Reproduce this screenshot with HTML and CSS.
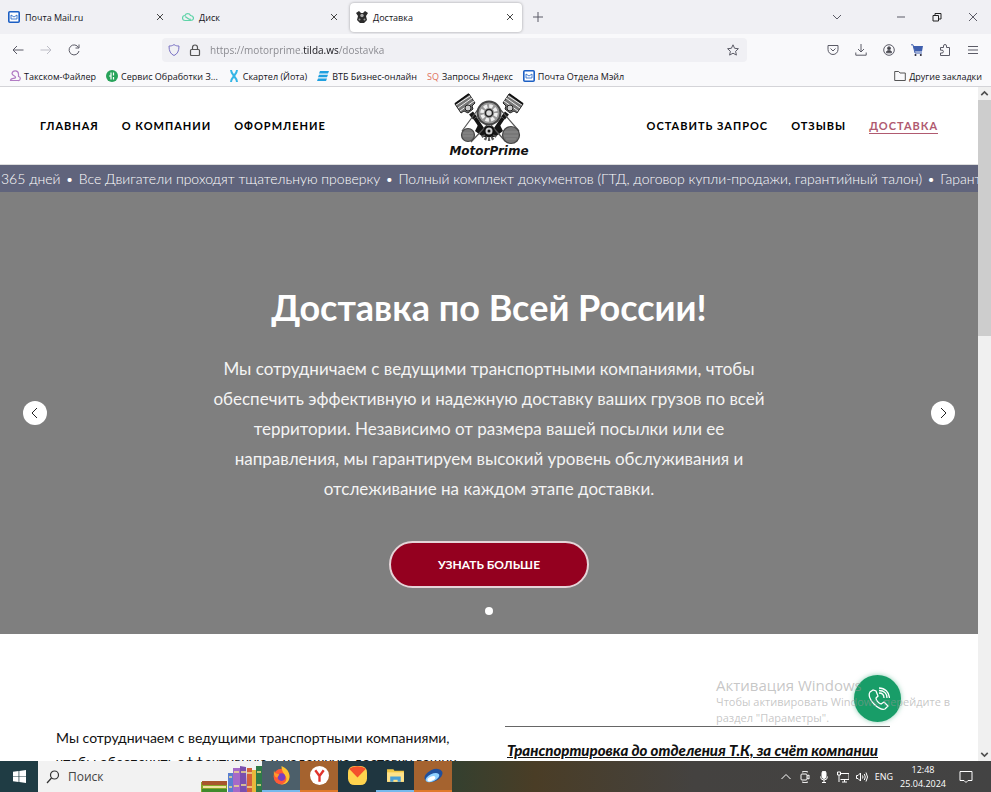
FILE: index.html
```html
<!DOCTYPE html>
<html lang="ru">
<head>
    <meta charset="UTF-8">
    <meta name="viewport" content="width=device-width, initial-scale=1.0">
    <title>Доставка</title>
    <link rel="stylesheet" href="styles.css">
</head>
<body>
    <!-- Browser tabs -->
    <div class="tab-bar">
        <div class="tab">
            <svg class="icon-small" viewBox="0 0 12 12"><rect x=".8" y=".8" width="10.400" height="10.400" rx="1" fill="#fff" stroke="#1c5fc4" stroke-width="1.600"/><path d="M3 4v4h6V4M3 4l3 2 3-2" fill="none" stroke="#1c5fc4" stroke-width=".8"/></svg>
            <span class="tab-title">Почта Mail.ru</span>
            <button class="tab-close" aria-label="Закрыть"><svg viewBox="0 0 8 8"><path d="M1 1l6 6M7 1L1 7"/></svg></button>
        </div>
        <div class="tab">
            <svg class="icon-small" viewBox="0 0 12 12"><path d="M3 9.500a2.500 2.500 0 0 1 0-5 3 3 0 0 1 5.500 0c4 .5 4 5 0 5zM3 6c2-.5 3 3.500 6 2" fill="none" stroke="#5fd3a8" stroke-width="1.200"/></svg>
            <span class="tab-title">Диск</span>
            <button class="tab-close" aria-label="Закрыть"><svg viewBox="0 0 8 8"><path d="M1 1l6 6M7 1L1 7"/></svg></button>
        </div>
        <div class="tab active">
            <svg class="icon-small" viewBox="0 0 12 12"><path d="M0 2l3-2 2 2h2l2-2 3 2-2 3 1 4-3 3H4L1 9l1-4z" fill="#2b2b2b"/><circle cx="6" cy="4.500" r="1.700" fill="#aaa"/><circle cx="3.500" cy="8.500" r="1" fill="#999"/><circle cx="8.500" cy="8.500" r="1" fill="#999"/></svg>
            <span class="tab-title">Доставка</span>
            <button class="tab-close" aria-label="Закрыть"><svg viewBox="0 0 8 8"><path d="M1 1l6 6M7 1L1 7"/></svg></button>
        </div>
        <button class="icon-button" aria-label="Новая вкладка"><svg viewBox="0 0 12 12"><path d="M6 1v10M1 6h10"/></svg></button>
        <div class="window-controls">
            <button class="icon-button list-tabs" aria-label="Список вкладок"><svg viewBox="0 0 12 12"><path d="M2 4l4 4 4-4"/></svg></button>
            <button class="icon-button" aria-label="Свернуть"><svg viewBox="0 0 12 12"><path d="M2 6h8"/></svg></button>
            <button class="icon-button" aria-label="Восстановить"><svg viewBox="0 0 12 12"><path d="M2 4.500h5.500V10H2zM4 4.500V2.500h6v5.500H7.500" stroke="#222"/></svg></button>
            <button class="icon-button" aria-label="Закрыть окно"><svg viewBox="0 0 12 12"><path d="M2 2l8 8M10 2l-8 8"/></svg></button>
        </div>
    </div>

    <!-- Address bar -->
    <div class="nav-bar">
        <div class="nav-buttons">
            <button class="icon-button" aria-label="Назад"><svg viewBox="0 0 12 12"><path d="M11.500 6H1M5 2L1 6l4 4"/></svg></button>
            <button class="icon-button disabled" aria-label="Вперёд"><svg viewBox="0 0 12 12"><path d="M.5 6H11M7 2l4 4-4 4"/></svg></button>
            <button class="icon-button" aria-label="Обновить"><svg viewBox="0 0 12 12"><path d="M10.500 3.500A5 5 0 1 0 11 7M11 .5v3.500H7.500"/></svg></button>
        </div>
        <div class="address">
            <svg class="icon-small" viewBox="0 0 12 12"><path d="M6 .6C4 2 2.500 2 1 2c0 5 1.500 8 5 9.500C9.500 10 11 7 11 2 9.500 2 8 2 6 .6z" fill="none" stroke="#7a72c4"/></svg>
            <svg class="icon-small" viewBox="0 0 12 12"><rect x="1.500" y="5.500" width="9" height="6" rx="1" fill="none" stroke="#555" stroke-width="1.200"/><path d="M3.500 5.500V3.500a2.500 2.500 0 0 1 5 0v2" fill="none" stroke="#555" stroke-width="1.200"/></svg>
            <input class="url" type="text" aria-label="Адрес" value="https://motorprime.tilda.ws/dostavka">
            <button class="icon-button" aria-label="В закладки"><svg viewBox="0 0 12 12"><path d="M6 .8l1.600 3.500 3.800.4-2.800 2.600.8 3.800L6 9.200l-3.400 1.900.8-3.800L.6 4.700l3.800-.4z"/></svg></button>
        </div>
        <div class="nav-tools">
            <button class="icon-button" aria-label="Pocket"><svg viewBox="0 0 12 12"><path d="M1 1.500h10v4a5 5 0 0 1-10 0zM3.500 4.500L6 7l2.500-2.500"/></svg></button>
            <button class="icon-button" aria-label="Загрузки"><svg viewBox="0 0 12 12"><path d="M6 0v8M3 5l3 3 3-3M.8 8.500v2.700h10.400V8.500"/></svg></button>
            <button class="icon-button" aria-label="Аккаунт"><svg viewBox="0 0 12 12"><circle cx="6" cy="6" r="5.300"/><circle cx="6" cy="4.300" r="1.500" fill="#444"/><path d="M3.300 8.800a2.700 2.200 0 0 1 5.400 0z" fill="#444"/></svg></button>
            <button class="icon-button" aria-label="Корзина"><svg viewBox="0 0 12 12"><path d="M2 2h10L11 7.500H4z" fill="#3f5fae" stroke="none"/><path d="M0 .8h2L4 9h7" stroke="#3f5fae"/><circle cx="4.500" cy="11" r="1" fill="#223" stroke="none"/><circle cx="9.800" cy="11" r="1" fill="#223" stroke="none"/></svg></button>
            <button class="icon-button" aria-label="Расширения"><svg viewBox="0 0 12 12"><path d="M1.500 3.500h3V2a1.500 1.500 0 0 1 3 0v1.500H10.500v8H1.500V9H3a1.300 1.300 0 0 0 0-2.800H1.500z"/></svg></button>
            <button class="icon-button" aria-label="Меню"><svg viewBox="0 0 12 12"><path d="M1 2.500h10M1 6h10M1 9.500h10"/></svg></button>
        </div>
    </div>

    <!-- Bookmarks -->
    <div class="bookmarks">
        <a class="bookmark" href="#"><svg class="icon-small" viewBox="0 0 12 12"><path d="M1.500 10.500h7.500a2 2 0 0 0 .5-4V4A3.300 3.300 0 0 0 3 3.500C3 6 7 5.500 6.500 7.500S2 7 1.500 10.500z" fill="none" stroke="#b27cc4" stroke-width="1.200"/></svg>Такском-Файлер</a>
        <a class="bookmark" href="#"><svg class="icon-small" viewBox="0 0 12 12"><circle cx="6" cy="6" r="6" fill="#28a35a"/><path d="M5 2.500v7M7.500 2.500v3M7.500 7v2.500M3 6h2" stroke="#fff" stroke-width="1.200"/></svg>Сервис Обработки З...</a>
        <a class="bookmark" href="#"><svg class="icon-small" viewBox="0 0 12 12"><path d="M3 0c0 5 6 7 6 12M9 0c0 5-6 7-6 12" fill="none" stroke="#35b6e6" stroke-width="2"/></svg>Скартел (Йота)</a>
        <a class="bookmark" href="#"><svg class="icon-small" viewBox="0 0 12 12"><path d="M3 1h9l-1 2.500H2zM2 4.700h9L10 7.200H1zM1 8.400h9L9 11H0z" fill="#1fa0e0"/></svg>ВТБ Бизнес-онлайн</a>
        <a class="bookmark" href="#"><span class="sq">SQ</span>Запросы Яндекс</a>
        <a class="bookmark" href="#"><svg class="icon-small" viewBox="0 0 12 12"><rect x=".8" y=".8" width="10.400" height="10.400" rx="1" fill="#fff" stroke="#1c5fc4" stroke-width="1.600"/><path d="M3 4v4h6V4M3 4l3 2 3-2" fill="none" stroke="#1c5fc4" stroke-width=".8"/></svg>Почта Отдела Мэйл</a>
        <a class="bookmark other" href="#"><svg class="icon-small" viewBox="0 0 12 12"><path d="M.7 10.500v-9h4L6 3h5.300v7.500z" fill="none" stroke="#555"/></svg>Другие закладки</a>
    </div>

    <!-- Page -->
    <div class="viewport">
        <div class="page">
            <header class="header">
                <nav class="menu">
                    <a href="#">ГЛАВНАЯ</a>
                    <a href="#">О КОМПАНИИ</a>
                    <a href="#">ОФОРМЛЕНИЕ</a>
                </nav>
                <a class="logo" href="#">
                    <svg viewBox="0 0 72 52">
                        <!-- pistons -->
                        <g id="piston">
                            <path d="M2 11L16 1l6 9-3 3 1 3-5 4-4-2-3 2z" fill="#777" stroke="#222"/>
                            <path d="M3 12L17 3M5 15L19 5M7 18L21 8" stroke="#eee" stroke-width="1"/>
                            <path d="M2 11L16 1" stroke="#111" stroke-width="2"/>
                            <circle cx="15" cy="15" r="3" fill="#ccc" stroke="#222"/>
                            <path d="M18 20l4 5" stroke="#161616" stroke-width="5"/>
                        </g>
                        <use href="#piston" transform="translate(72 0) scale(-1 1)"/>
                        <!-- belts and pulleys -->
                        <path d="M22 25l8 12M50 25l-8 12" stroke="#151515" stroke-width="4"/>
                        <path d="M25 32l11 6 11-6 3 6-8 6H30l-8-6z" fill="#151515"/>
                        <path d="M26 15L9 38M46 15l20 23M35 31L18 49M38 32l14 16" stroke="#555" stroke-width="1.200"/>
                        <circle cx="36" cy="20" r="11.500" fill="#999" stroke="#444" stroke-width="2"/>
                        <circle cx="36" cy="20" r="7" fill="none" stroke="#eee" stroke-width="3.500" stroke-dasharray="3.500 2"/>
                        <circle cx="36" cy="20" r="3.500" fill="#ddd" stroke="#222" stroke-width="1.500"/>
                        <path d="M30 42a6.500 6.500 0 0 0 12 0" stroke="#555" stroke-width="4" stroke-dasharray="2 1.300"/>
                        <circle cx="36" cy="38" r="4.500" fill="#ccc" stroke="#111" stroke-width="2"/>
                        <circle cx="36" cy="38" r="1.500" fill="#111"/>
                        <circle cx="15" cy="42" r="6.500" fill="#777" stroke="#444" stroke-width="1.200"/>
                        <circle cx="58" cy="42" r="8.500" fill="#777" stroke="#444" stroke-width="1.200"/>
                        <path d="M10 40h10M10 43h10M51 39h14M51 43h14M53 46h10" stroke="#8c8c8c"/>
                    </svg>
                    <span class="logo-text">MotorPrime</span>
                </a>
                <nav class="menu menu-right">
                    <a href="#">ОСТАВИТЬ ЗАПРОС</a>
                    <a href="#">ОТЗЫВЫ</a>
                    <a class="current" href="#">ДОСТАВКА</a>
                </nav>
            </header>

            <div class="ticker">
                <span>365 дней</span><span>•</span>
                <span>Все Двигатели проходят тщательную проверку</span><span>•</span>
                <span>Полный комплект документов (ГТД, договор купли-продажи, гарантийный талон)</span><span>•</span>
                <span>Гарант</span>
            </div>

            <section class="hero">
                <button class="arrow" aria-label="Назад"><svg viewBox="0 0 12 12"><path d="M8 1L3 6l5 5"/></svg></button>
                <div class="slide">
                    <h1>Доставка по Всей России!</h1>
                    <p>Мы сотрудничаем с ведущими транспортными компаниями, чтобы<br>
                    обеспечить эффективную и надежную доставку ваших грузов по всей<br>
                    территории. Независимо от размера вашей посылки или ее<br>
                    направления, мы гарантируем высокий уровень обслуживания и<br>
                    отслеживание на каждом этапе доставки.</p>
                    <a class="more" href="#">УЗНАТЬ БОЛЬШЕ</a>
                    <span class="dot"></span>
                </div>
                <button class="arrow" aria-label="Вперёд"><svg viewBox="0 0 12 12"><path d="M4 1l5 5-5 5"/></svg></button>
            </section>

            <section class="info">
                <p class="info-text">Мы сотрудничаем с ведущими транспортными компаниями,<br>
                чтобы обеспечить эффективную и надежную доставку ваших</p>
                <div class="info-item"><a href="#">Транспортировка до отделения Т.К, за счёт компании</a></div>
            </section>
        </div>

        <button class="call" aria-label="Позвонить">
            <svg viewBox="0 0 24 24"><path d="M7 3L4 5c-2 3 0 8 4 12s8 6 11 5l3-3-4-4-3 2c-3-1-5-4-5-6l2-2-2-5zM13 6c3 0 5 2 5 5M13 3.500c5 0 8 3 8 7.500M13 1c6 0 10 4 10.500 10"/></svg>
        </button>
        <div class="watermark">
            <div class="watermark-title">Активация Windows</div>
            Чтобы активировать Windows, перейдите в<br>раздел "Параметры".
        </div>

        <div class="scrollbar">
            <svg viewBox="0 0 12 12"><path d="M3 7.500l3-3 3 3"/></svg>
            <div class="thumb"></div>
            <svg viewBox="0 0 12 12"><path d="M3 4.500l3 3 3-3"/></svg>
        </div>
    </div>

    <!-- Taskbar -->
    <div class="taskbar">
        <button class="start" aria-label="Пуск"><svg viewBox="0 0 14 14"><path d="M0 2l6-.8v5.400H0zM6.800 1L14 0v6.600H6.800zM0 7.400h6v5.400L0 12zM6.800 7.400H14V14l-7.200-1z" fill="#fff"/></svg></button>
        <div class="search">
            <svg class="search-icon" viewBox="0 0 14 14"><circle cx="8.500" cy="5" r="4" fill="none" stroke="#333" stroke-width="1.200"/><path d="M5.500 8L1 13" stroke="#333" stroke-width="1.200"/></svg>
            <input type="text" placeholder="Поиск" aria-label="Поиск">
            <svg class="books" viewBox="0 0 62 31">
                <path d="M1 21h26v10H1z" fill="#8aa62a"/><path d="M2 20h25v4H2z" fill="#a8552c"/><path d="M3 25h23v2H3z" fill="#f0e3a0"/><path d="M2 28h25v3H2z" fill="#3f8a2c"/>
                <path d="M28 12h5v19h-5z" fill="#5a7fd0"/><path d="M33 7h7v24h-7z" fill="#a569c8"/><path d="M40 5l6 1 1 25h-7z" fill="#7a4fae"/><path d="M47 7h5v24h-5z" fill="#d3603c"/><path d="M52 9h4v22h-4z" fill="#e8b93c"/><path d="M56 5h6v26h-6z" fill="#2f7a48"/>
                <path d="M34 11h5M34 25h5M41 11h5M41 24h5M47 12h5M47 26h5M57 11h4M57 24h4M29 16h3M29 26h3" stroke="#f2dd8a" stroke-width="1.500"/>
            </svg>
        </div>
        <button class="app app-open" aria-label="Firefox"><svg viewBox="0 0 18 18"><circle cx="9" cy="10" r="7.500" fill="#ff5a36"/><path d="M9 0c5 2 8 6 7.500 11S12 18 8 17.500c6-1 7-6 4-9-1-2-3-4-3-8.500z" fill="#ffc22e"/><circle cx="9" cy="10.500" r="3.600" fill="#7a3fc0"/><path d="M2 4c0 3 2 3 5 4l-2 3c-2 0-4-3-3-7z" fill="#ff9a2a"/></svg></button>
        <button class="app app-alert" aria-label="Яндекс Браузер"><svg viewBox="0 0 18 18"><circle cx="9" cy="9" r="9" fill="#fff"/><path d="M5 4l4 5.500L13 4M9 9v6" fill="none" stroke="#e0332c" stroke-width="2.200"/></svg></button>
        <button class="app" aria-label="Яндекс Почта"><svg viewBox="0 0 18 18"><rect width="18" height="18" rx="6" fill="#ffd34e"/><path d="M1 2.500Q9-2 17 2.500L9 11z" fill="#f4502c"/></svg></button>
        <button class="app app-open app-plain" aria-label="Проводник"><svg viewBox="0 0 18 18"><path d="M1 3h6l1 1.500h9V15H1z" fill="#f3c846"/><path d="M1 6h16v9H1z" fill="#ffe28a"/><path d="M4 15v-5h10v5h-3v-2H7v2z" fill="#4b9fd6"/></svg></button>
        <button class="app app-alert" aria-label="Яндекс Диск"><svg viewBox="0 0 18 18"><ellipse cx="9" cy="9" rx="9" ry="5.500" transform="rotate(-25 9 9)" fill="#1f4f9c"/><ellipse cx="8" cy="11" rx="7" ry="3.500" transform="rotate(-25 8 11)" fill="#8fd0ff"/><ellipse cx="7" cy="12" rx="4" ry="2" transform="rotate(-25 7 12)" fill="#fff"/></svg></button>
        <div class="tray">
            <svg viewBox="0 0 12 12"><path d="M1.500 8L6 3.500 10.500 8"/></svg>
            <svg viewBox="0 0 12 12"><rect x="2" y="3" width="6" height="6" rx="1"/><path d="M8 5l2-1v4L8 7M3 1q3-1.500 6 0M3 11q3 1.500 6 0"/></svg>
            <svg viewBox="0 0 12 12"><rect x="4" y="0" width="4" height="7.500" rx="2" fill="#fff"/><path d="M2.500 5.500a3.500 3.500 0 0 0 7 0M6 9v3M4 11.500h4"/></svg>
            <svg viewBox="0 0 12 12"><path d="M3.500 2.500H12v6H3.500M7.500 8.500v2.500M5 11h5M.5 1h3v3h-3zM2 4v7"/></svg>
            <svg viewBox="0 0 12 12"><path d="M.5 4.500H2L4.500 2v8L2 7.500H.5zM6.500 4.500q1 1.500 0 3M8.300 3q2 3 0 6M10 1.500q3 4.500 0 9"/></svg>
            <span>ENG</span>
            <div class="clock">12:48<br>25.04.2024</div>
            <svg class="notes" viewBox="0 0 14 14"><path d="M1 1.500h12v9H9L7 12.500 5 10.500H1z"/></svg>
        </div>
    </div>
</body>
</html>
```
FILE: styles.css
```css
* {
    box-sizing: border-box;
}

body {
    margin: 0;
    height: 100vh;
    display: flex;
    flex-direction: column;
    overflow: hidden;
    font-family: "Open Sans", "Noto Sans", sans-serif;
    font-size: 9px;
    color: #15141a;
    background: #ffffff;
}

a {
    color: inherit;
    text-decoration: none;
}

button {
    padding: 0;
    border: none;
    background: none;
    cursor: pointer;
}

input {
    min-width: 0;
    padding: 0;
    border: none;
    outline: none;
    background: none;
    font-family: inherit;
}

.icon-small {
    width: 12px;
    height: 12px;
    flex: none;
}

.icon-button {
    width: 28px;
    height: 24px;
    display: flex;
    justify-content: center;
    align-items: center;
}

.icon-button svg {
    width: 12px;
    height: 12px;
    fill: none;
    stroke: #5b5b66;
    stroke-width: 1;
}

.icon-button.disabled svg {
    stroke: #bdbdc6;
}

/* tabs */
.tab-bar {
    height: 34px;
    flex: none;
    display: flex;
    align-items: center;
    background: #f0f0f4;
}

.tab {
    width: 172px;
    height: 29px;
    margin-right: 2px;
    padding: 0 8px;
    display: flex;
    align-items: center;
    gap: 5px;
    border-radius: 4px;
}

.tab.active {
    margin-left: 2px;
    padding-left: 6px;
    background: #ffffff;
    box-shadow: 0 0 3px rgba(0, 0, 0, 0.35);
}

.tab-title {
    flex: 1;
}

.tab-close {
    width: 8px;
    height: 8px;
    display: flex;
}

.tab-close svg {
    width: 8px;
    height: 8px;
    stroke: #444;
}

.window-controls {
    margin-left: auto;
    display: flex;
}

.window-controls .icon-button {
    width: 36px;
}

.window-controls .list-tabs {
    margin-right: 28px;
}

/* address bar */
.nav-bar {
    height: 32px;
    flex: none;
    display: grid;
    grid-template-columns: 162px 1fr 244px;
    align-items: center;
    background: #f9f9fb;
}

.nav-buttons {
    padding-left: 4px;
    display: flex;
}

.address {
    height: 24px;
    padding-left: 6px;
    display: flex;
    align-items: center;
    gap: 9px;
    border-radius: 4px;
    background: #f0f0f4;
}

/* the domain is darker than the rest of the address */
.url {
    flex: 1;
    font-size: 10px;
    color: transparent;
    background: linear-gradient(to right, #85858b 93px, #15141a 93px, #15141a 129px, #85858b 129px);
    background-clip: text;
    -webkit-background-clip: text;
}

.nav-tools {
    padding-right: 4px;
    display: flex;
    justify-content: flex-end;
}

/* bookmarks */
.bookmarks {
    height: 21px;
    flex: none;
    padding: 0 9px;
    display: flex;
    align-items: center;
    gap: 10px;
    border-bottom: 1px solid #d4d4d8;
    background: #f9f9fb;
}

.bookmark {
    display: flex;
    align-items: center;
    gap: 3px;
    white-space: nowrap;
}

.bookmark.other {
    margin-left: auto;
}

.sq {
    color: #e0705c;
}

/* page */
.viewport {
    position: relative;
    flex: 1;
    min-height: 0;
    display: flex;
}

.page {
    flex: 1;
    min-width: 0;
    overflow: hidden;
    font-family: Lato, "Open Sans", sans-serif;
}

.header {
    height: 78px;
    padding: 0 40px;
    display: grid;
    grid-template-columns: 1fr auto 1fr;
    align-items: center;
    border-bottom: 1px solid #ddd;
}

.menu {
    display: flex;
    gap: 23px;
    font-size: 11px;
    line-height: 15px;
    font-weight: bold;
    letter-spacing: 1px;
    white-space: nowrap;
    color: #000000;
}

.menu-right {
    justify-content: flex-end;
}

.menu .current {
    color: #b05a70;
    border-bottom: 1px solid #b05a70;
}

.logo {
    padding-bottom: 2px;
    display: flex;
    flex-direction: column;
    align-items: center;
}

.logo svg {
    width: 72px;
    height: 52px;
    fill: none;
}

.logo-text {
    font-family: "DejaVu Sans", sans-serif;
    font-size: 12px;
    line-height: 12px;
    font-weight: bold;
    font-style: italic;
    color: #111;
}

.ticker {
    height: 27px;
    padding-left: 1px;
    display: flex;
    align-items: center;
    gap: 5px;
    overflow: hidden;
    font-size: 14px;
    font-weight: 300;
    white-space: nowrap;
    color: #ffffff;
    background: #60647c;
}

.hero {
    height: 442px;
    padding: 0 23px;
    display: flex;
    justify-content: space-between;
    align-items: center;
    background: #7f7f7f;
}

.arrow {
    width: 24px;
    height: 24px;
    display: flex;
    justify-content: center;
    align-items: center;
    border-radius: 50%;
    background: #ffffff;
}

.arrow svg {
    width: 12px;
    height: 12px;
    fill: none;
    stroke: #222;
}

.slide {
    padding-top: 73px;
    display: flex;
    flex-direction: column;
    align-items: center;
    text-align: center;
    color: #ffffff;
}

.slide h1 {
    margin: 0 0 24px;
    font-size: 36px;
    line-height: 46px;
    font-weight: bold;
}

.slide p {
    margin: 0 0 37px;
    font-size: 17px;
    line-height: 30px;
    white-space: nowrap;
    color: #f4f4f4;
}

.more {
    width: 200px;
    height: 47px;
    display: flex;
    justify-content: center;
    align-items: center;
    border: 2px solid #e4d4d8;
    border-radius: 24px;
    font-size: 12px;
    font-weight: bold;
    background: #94001f;
}

.dot {
    width: 8px;
    height: 8px;
    margin-top: 19px;
    border-radius: 50%;
    background: #ffffff;
}

.info {
    padding: 92px 88px 0 56px;
    display: flex;
    justify-content: space-between;
    font-size: 15px;
    line-height: 24px;
    white-space: nowrap;
    color: #111;
}

.info-text {
    margin: 0;
    font-size: 14px;
}

.info-item {
    width: 385px;
    padding: 11px 2px;
    border-top: 1px solid #666;
    font-weight: 900;
    font-style: italic;
    text-decoration: underline;
}

.call {
    position: absolute;
    right: 90px;
    bottom: 39px;
    width: 47px;
    height: 47px;
    display: flex;
    justify-content: center;
    align-items: center;
    border-radius: 50%;
    background: #189d68;
    box-shadow: 0 0 5px rgba(24, 157, 104, 0.5);
}

.call svg {
    width: 24px;
    height: 24px;
    fill: none;
    stroke: #ffffff;
    stroke-width: 1.3;
}

.watermark {
    position: absolute;
    right: 40px;
    bottom: 35px;
    width: 235px;
    font-size: 11px;
    line-height: 16px;
    white-space: nowrap;
    color: rgba(150, 150, 150, 0.55);
    pointer-events: none;
}

.watermark-title {
    font-size: 15px;
    line-height: 18px;
}

.scrollbar {
    width: 13px;
    flex: none;
    display: flex;
    flex-direction: column;
    background: #f0f0f0;
}

.scrollbar svg {
    width: 13px;
    height: 13px;
    fill: none;
    stroke: #505050;
    stroke-width: 1.5;
}

.thumb {
    height: 35%;
    margin-bottom: auto;
    background: #cdcdcd;
}

/* taskbar */
.taskbar {
    height: 31px;
    flex: none;
    display: flex;
    background: linear-gradient(to right, #1f3640 0, #1f3640 40%, #35402f 46%, #4a3d26 54%, #444240 70%, #434343 100%);
}

.start {
    width: 38px;
    display: flex;
    justify-content: center;
    align-items: center;
    background: #1f3c44;
}

.start svg {
    width: 13px;
    height: 13px;
}

.search {
    width: 224px;
    padding-left: 8px;
    display: flex;
    align-items: center;
    gap: 8px;
    background: #f2f2f2;
}

.search input {
    flex: 1;
    font-size: 12px;
}

.search input::placeholder {
    color: #444;
}

.search-icon {
    width: 14px;
    height: 14px;
}

.books {
    width: 62px;
    height: 31px;
}

.app {
    width: 38px;
    display: flex;
    justify-content: center;
    align-items: center;
    border-bottom: 2px solid transparent;
}

.app svg {
    width: 19px;
    height: 19px;
}

.app-open {
    border-color: #76b9ed;
    background-color: #4c5f6a;
}

.app-plain {
    background-color: #1f3640;
}

.app-alert {
    border-color: #e07a2c;
    background-color: #a5632f;
}

.tray {
    margin-left: auto;
    padding-right: 18px;
    display: flex;
    align-items: center;
    gap: 7px;
    color: #ffffff;
}

.tray svg {
    width: 12px;
    height: 12px;
    fill: none;
    stroke: #ffffff;
}

.clock {
    line-height: 14px;
    text-align: center;
}

.tray .notes {
    width: 14px;
    height: 14px;
    margin-left: 6px;
}
```
